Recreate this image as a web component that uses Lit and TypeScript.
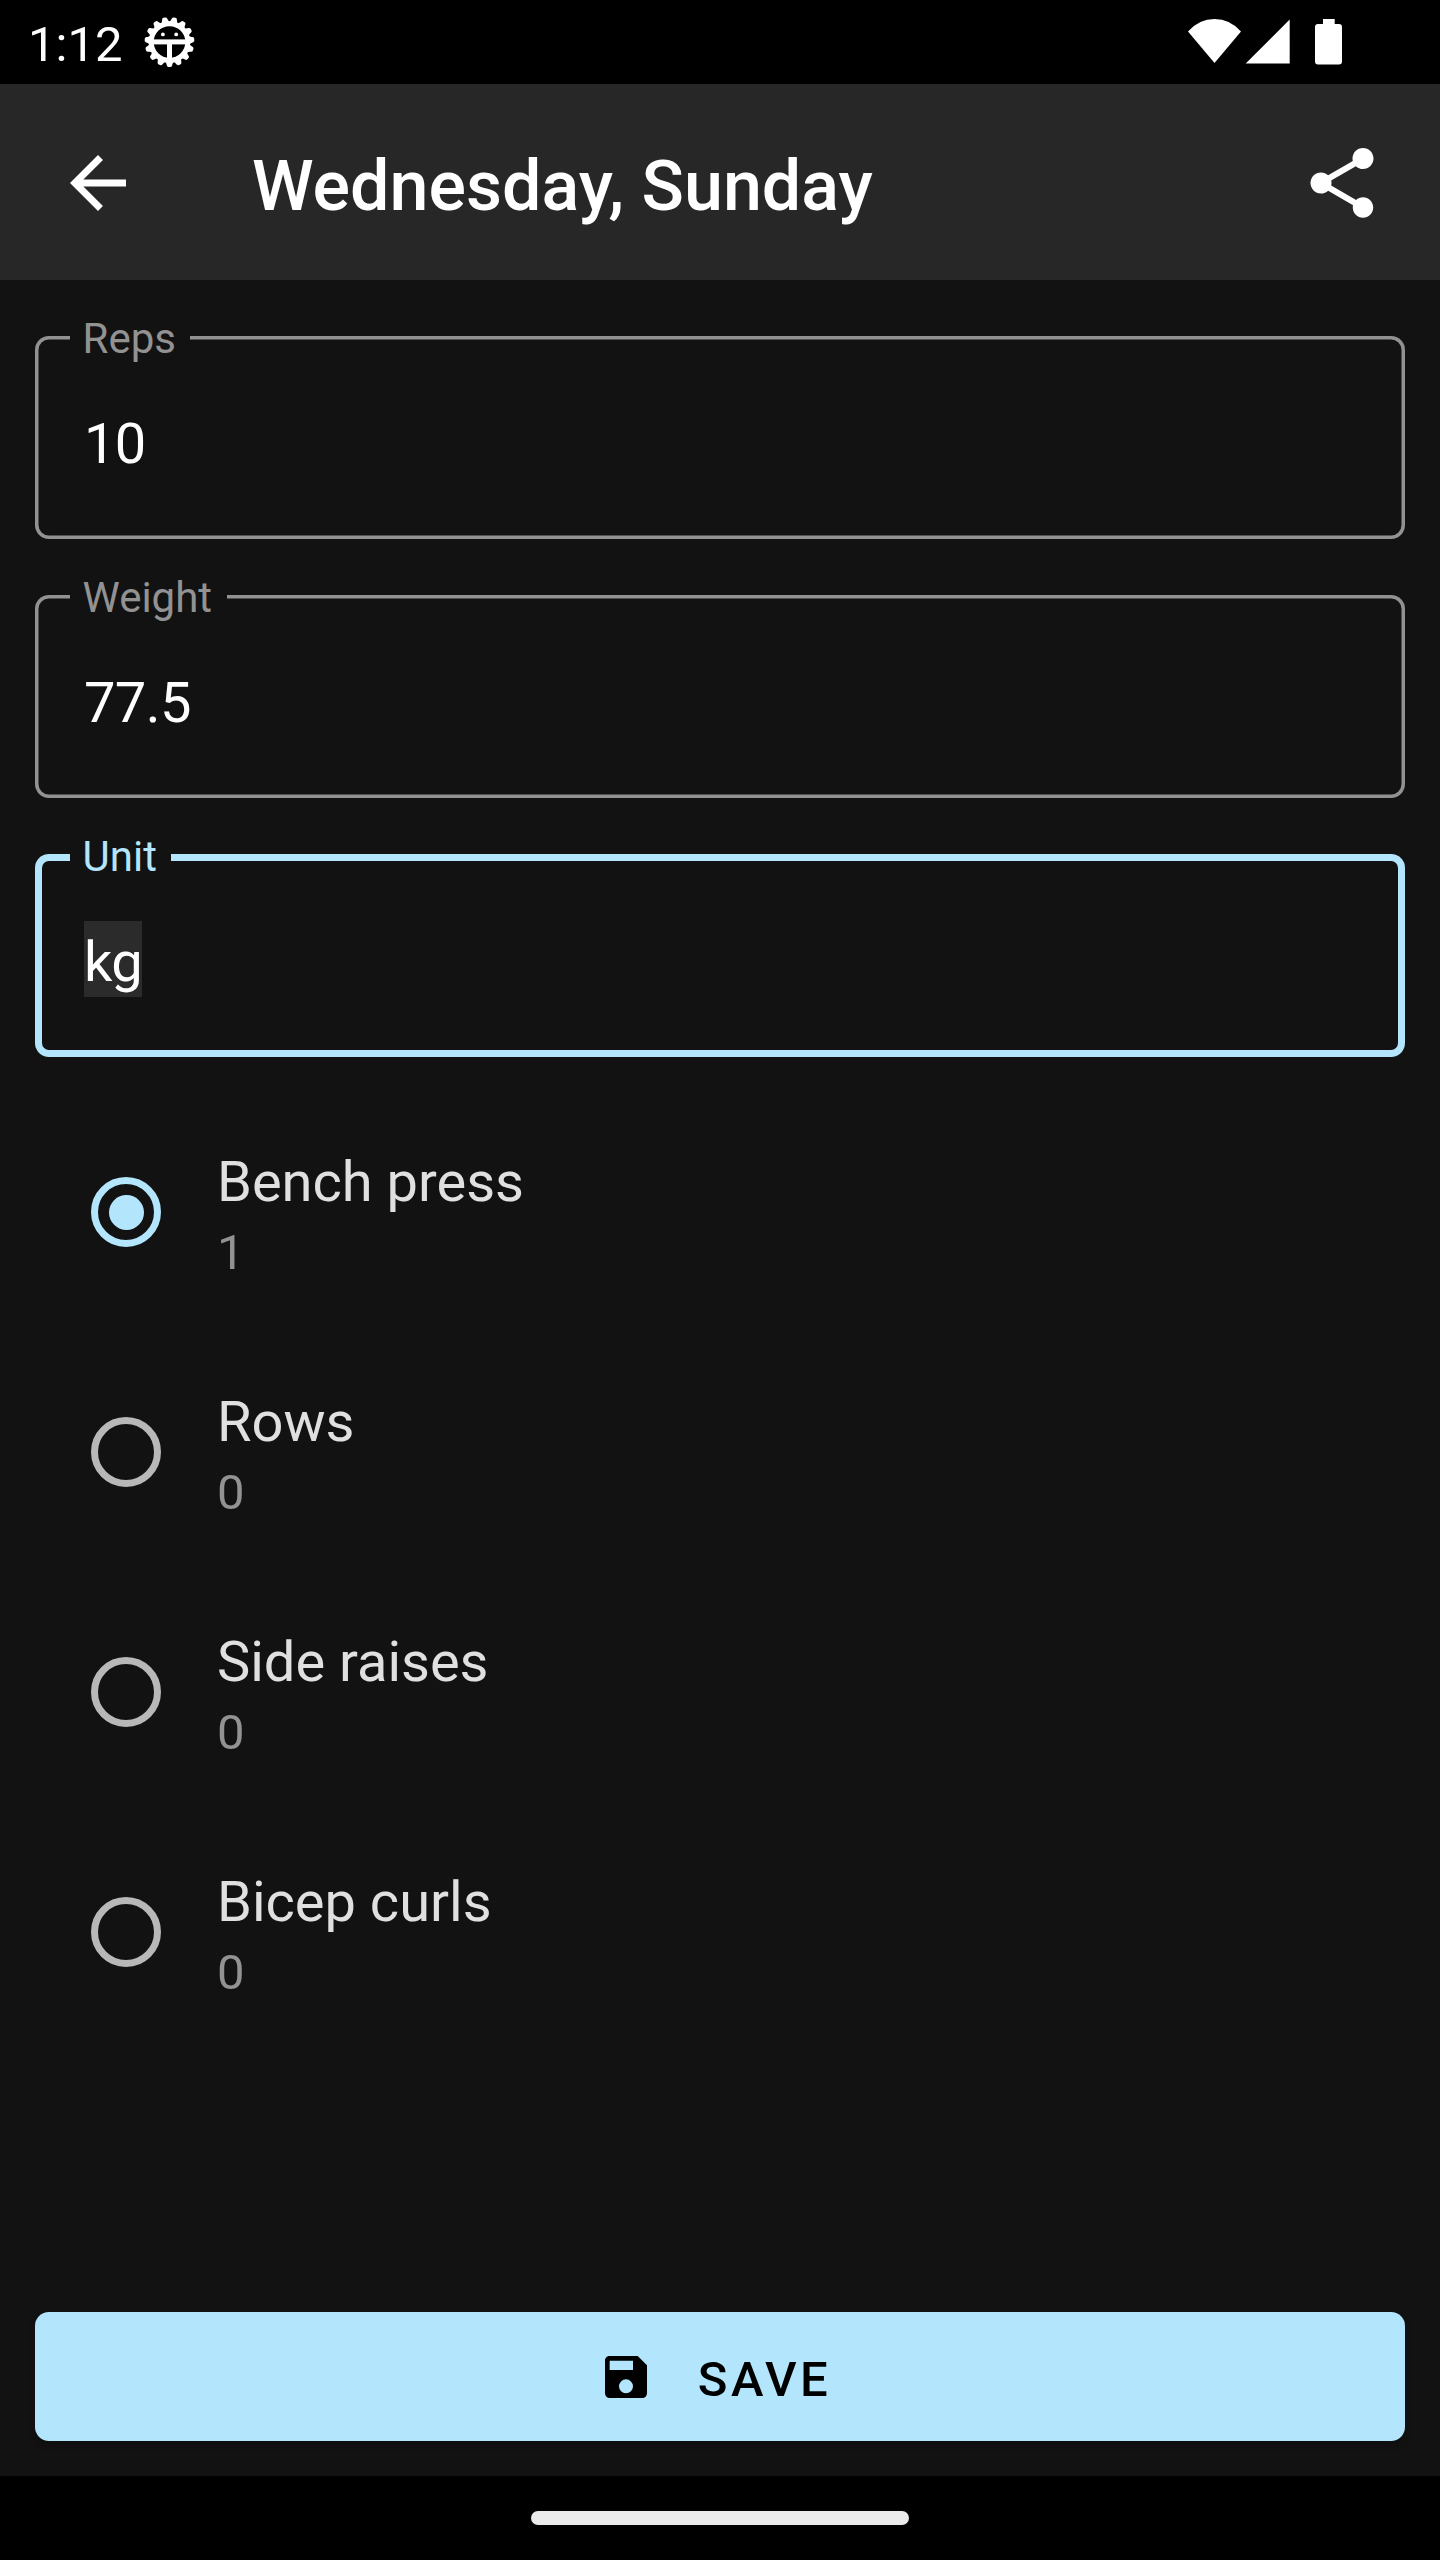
import { LitElement, html, svg, css } from "lit";
import { customElement, property, state } from "lit/decorators.js";
import { classMap } from "lit/directives/class-map.js";

interface Exercise {
  name: string;
  sets: number;
}

// Badge outline: 15 rounded teeth around a ring, one pointing straight down.
const TEETH = Array.from({ length: 15 }, (_, i) => 12 + i * 24);

@customElement("status-bar")
class StatusBar extends LitElement {
  static styles = css`
    :host { display: flex; box-sizing: border-box; height: 84px; background: #000; color: #fff; justify-content: space-between; padding: 0 98px 0 28px; }
    .left, .right { display: flex; align-items: flex-start; }
    .clock { font-size: 49px; line-height: 57px; padding-top: 16px; width: 116px; }
    svg { display: block; fill: #fff; }
    .badge { margin-top: 17px; }
  `;
  render() {
    return html`
      <div class="left">
        <span class="clock">1:12</span>
        <svg class="badge" width="51" height="51" viewBox="-25.5 -25 51 51">
          <circle r="18.3" fill="none" stroke="#fff" stroke-width="5"></circle>
          ${TEETH.map((a) => svg`<path transform=${`rotate(${a})`} d="M-4.6-19.5C-3.4-20.5-3-22-2.6-23.4Q-2.2-24.9-.8-24.9H.8Q2.2-24.9 2.6-23.4C3-22 3.4-20.5 4.6-19.5Z"></path>`)}
          <rect x="-17" y="-2.6" width="34" height="5"></rect>
          <rect x="-2.5" y="0" width="5" height="17"></rect>
          <circle cx="-6.6" cy="-7.6" r="1.9"></circle>
          <circle cx="6.7" cy="-7.6" r="1.9"></circle>
        </svg>
      </div>
      <div class="right">
        <svg width="154" height="84" viewBox="1188 0 154 84">
          <path d="M1214.5 63L1188 31.5Q1199 19 1214.5 19T1241 31.5Z"></path>
          <path d="M1245.7 63.5H1289.7V19.5Z"></path>
          <path d="M1323 19H1334.7V24H1339Q1342 24 1342 27V61.5Q1342 64.5 1339 64.5H1318Q1315 64.5 1315 61.5V27Q1315 24 1318 24H1323Z"></path>
        </svg>
      </div>
    `;
  }
}

@customElement("app-bar")
class AppBar extends LitElement {
  @property() heading = "";
  static styles = css`
    :host { display: flex; box-sizing: border-box; height: 196px; background: #272727; color: #fff; align-items: center; padding: 2px 56px 0; }
    svg { display: block; fill: #fff; width: 84px; height: 84px; }
    .title { flex: 1; margin: 0; padding: 6px 0 0 112px; font-size: 70px; line-height: 82px; font-weight: 500; white-space: nowrap; }
  `;
  render() {
    return html`
      <svg viewBox="0 0 24 24"><path d="M20 11H7.83l5.59-5.59L12 4l-8 8 8 8 1.41-1.41L7.83 13H20v-2z"></path></svg>
      <h1 class="title">${this.heading}</h1>
      <svg viewBox="0 0 24 24"><path d="M18 16.08c-.76 0-1.44.3-1.96.77L8.91 12.7c.05-.23.09-.46.09-.7s-.04-.47-.09-.7l7.05-4.11c.54.5 1.25.81 2.04.81 1.66 0 3-1.34 3-3s-1.34-3-3-3-3 1.34-3 3c0 .24.04.47.09.7L8.04 9.81C7.5 9.31 6.79 9 6 9c-1.66 0-3 1.34-3 3s1.34 3 3 3c.79 0 1.5-.31 2.04-.81l7.12 4.16c-.05.21-.08.43-.08.65 0 1.61 1.31 2.92 2.92 2.92s2.92-1.31 2.92-2.92-1.31-2.92-2.92-2.92z"></path></svg>
    `;
  }
}

@customElement("outlined-field")
class OutlinedField extends LitElement {
  @property() label = "";
  @property() value = "";
  @property({ type: Boolean }) active = false;
  static styles = css`
    :host { display: block; }
    .box { box-sizing: border-box; position: relative; height: 203px; border-radius: 14px; box-shadow: inset 0 0 0 3.5px #929292; padding: 67px 49px 0; }
    .label { position: absolute; left: 35px; top: -22px; padding: 0 14.5px 0 12.5px; background: #121212; color: #929292; font-size: 42px; line-height: 49px; white-space: nowrap; }
    .value { display: inline-block; height: 76px; box-sizing: border-box; padding-top: 8px; font-size: 56px; line-height: 66px; letter-spacing: -0.6px; color: #fff; }
    .active { box-shadow: inset 0 0 0 7px #b3e5fc; }
    .active .label { color: #b3e5fc; }
    .active .value { background: #2b2b2b; }
  `;
  render() {
    return html`
      <div class=${classMap({ box: true, active: this.active })}>
        <span class="label">${this.label}</span>
        <span class="value">${this.value}</span>
      </div>
    `;
  }
}

@customElement("exercise-option")
class ExerciseOption extends LitElement {
  @property() name = "";
  @property({ type: Number }) sets = 0;
  @property({ type: Boolean }) checked = false;
  static styles = css`
    :host { display: flex; height: 240px; align-items: flex-start; }
    .radio { box-sizing: border-box; width: 70px; height: 70px; margin: 28px 56px 0 56px; border: 7px solid #b8b8b8; border-radius: 50%; display: grid; place-items: center; }
    .checked { border-color: #b3e5fc; }
    .dot { width: 35px; height: 35px; border-radius: 50%; background: #b3e5fc; }
    .text { display: flex; flex-direction: column; }
    .name { font-size: 56px; line-height: 66px; color: #e0e0e0; }
    .sets { font-size: 49px; line-height: 57px; color: #929292; padding-top: 9px; }
  `;
  render() {
    return html`
      <span class=${classMap({ radio: true, checked: this.checked })}>
        ${this.checked ? html`<span class="dot"></span>` : null}
      </span>
      <span class="text">
        <span class="name">${this.name}</span>
        <span class="sets">${this.sets}</span>
      </span>
    `;
  }
}

@customElement("save-button")
class SaveButton extends LitElement {
  static styles = css`
    :host { display: block; }
    .button { display: flex; width: 100%; height: 129px; box-sizing: border-box; align-items: center; justify-content: center; border: 0; border-radius: 14px; background: #b3e5fc; color: #000; font: 500 49px/57px Roboto, sans-serif; letter-spacing: 3.5px; padding: 0 11px 0 0; box-shadow: 0 5px 7px rgba(0, 0, 0, 0.2); }
    svg { display: block; width: 56px; height: 56px; margin-right: 44px; }
    .caption { padding-top: 6px; }
  `;
  render() {
    return html`
      <button class="button">
        <svg viewBox="0 0 24 24"><path d="M15 9H5V5H15M12 19A3 3 0 0 1 9 16A3 3 0 0 1 12 13A3 3 0 0 1 15 16A3 3 0 0 1 12 19M17 3H5C3.89 3 3 3.9 3 5V19A2 2 0 0 0 5 21H19A2 2 0 0 0 21 19V7L17 3Z"></path></svg>
        <span class="caption">SAVE</span>
      </button>
    `;
  }
}

@customElement("app-root")
class AppRoot extends LitElement {
  @state() private selected = 0;
  private exercises: Exercise[] = [
    { name: "Bench press", sets: 1 },
    { name: "Rows", sets: 0 },
    { name: "Side raises", sets: 0 },
    { name: "Bicep curls", sets: 0 },
  ];
  static styles = css`
    :host { display: flex; flex-direction: column; width: 1440px; height: 2560px; background: #121212; font-family: Roboto, sans-serif; overflow: hidden; }
    .content { flex: 1; display: flex; flex-direction: column; box-sizing: border-box; padding: 56px 35px 35px; }
    .fields { display: flex; flex-direction: column; gap: 56px; }
    .list { flex: 1; padding-top: 92px; }
    .nav { display: flex; height: 84px; align-items: center; justify-content: center; background: #000; }
    .pill { width: 378px; height: 14px; border-radius: 7px; background: #ebebeb; }
  `;
  render() {
    return html`
      <status-bar></status-bar>
      <app-bar heading="Wednesday, Sunday"></app-bar>
      <main class="content">
        <div class="fields">
          <outlined-field label="Reps" value="10"></outlined-field>
          <outlined-field label="Weight" value="77.5"></outlined-field>
          <outlined-field label="Unit" value="kg" active></outlined-field>
        </div>
        <div class="list">
          ${this.exercises.map(
            (e, i) => html`<exercise-option .name=${e.name} .sets=${e.sets} .checked=${i === this.selected} @click=${() => (this.selected = i)}></exercise-option>`
          )}
        </div>
        <save-button></save-button>
      </main>
      <div class="nav"><div class="pill"></div></div>
    `;
  }
}
